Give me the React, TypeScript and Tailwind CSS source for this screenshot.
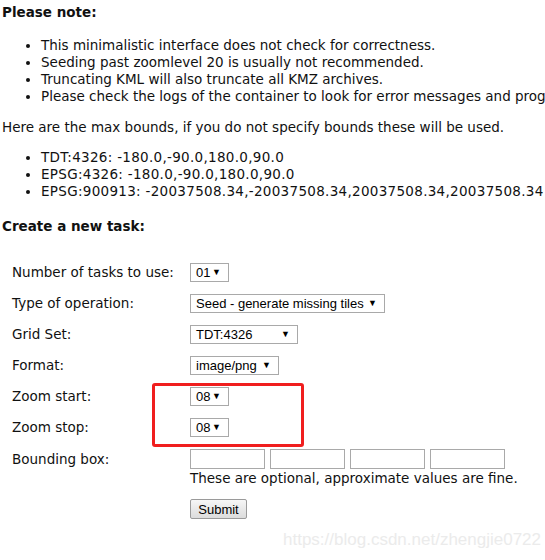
const bodyFont = { fontFamily: '"DejaVu Sans", Verdana, sans-serif' };

const notes = [
  'This minimalistic interface does not check for correctness.',
  'Seeding past zoomlevel 20 is usually not recommended.',
  'Truncating KML will also truncate all KMZ archives.',
  'Please check the logs of the container to look for error messages and progress.',
];

const bounds = [
  'TDT:4326: -180.0,-90.0,180.0,90.0',
  'EPSG:4326: -180.0,-90.0,180.0,90.0',
  'EPSG:900913: -20037508.34,-20037508.34,20037508.34,20037508.34',
];

function FakeSelect({ value, width }: { value: string; width: string }) {
  return (
    <div
      className={`flex h-[19px] items-center justify-between border border-[#a9a9a9] bg-white pl-[5px] pr-[7px] font-['Liberation_Sans',Arial,sans-serif] text-[13px] text-black ${width}`}
    >
      <span>{value}</span>
      <span className="text-[9px] leading-none">▼</span>
    </div>
  );
}

function Row({ label, children }: { label: string; children: React.ReactNode }) {
  return (
    <div className="flex h-[31px] items-center">
      <div className="w-[178px] shrink-0">{label}</div>
      <div>{children}</div>
    </div>
  );
}

export default function App() {
  return (
    <div
      className="relative h-[560px] w-[545px] overflow-hidden bg-white text-[13.5px] leading-[17px] text-[#111]"
      style={bodyFont}
    >
      <div className="whitespace-nowrap pl-[2px] pt-[4px]">
        <h3 className="font-bold">Please note:</h3>

        <ul className="mt-[16px] list-disc pl-[39px]">
          {notes.map((note) => (
            <li key={note}>{note}</li>
          ))}
        </ul>

        <p className="mt-[14px]">
          Here are the max bounds, if you do not specify bounds these will be used.
        </p>

        <ul className="mt-[13px] list-disc pl-[39px] tracking-[0.3px]">
          {bounds.map((b) => (
            <li key={b}>{b}</li>
          ))}
        </ul>

        <h3 className="mt-[18px] font-bold">Create a new task:</h3>

        <div className="mt-[22px] pl-[10px]">
          <Row label="Number of tasks to use:">
            <FakeSelect value="01" width="w-[39px]" />
          </Row>
          <Row label="Type of operation:">
            <FakeSelect value="Seed - generate missing tiles" width="w-[195px]" />
          </Row>
          <Row label="Grid Set:">
            <FakeSelect value="TDT:4326" width="w-[108px]" />
          </Row>
          <Row label="Format:">
            <FakeSelect value="image/png" width="w-[89px]" />
          </Row>
          <Row label="Zoom start:">
            <FakeSelect value="08" width="w-[39px]" />
          </Row>
          <Row label="Zoom stop:">
            <FakeSelect value="08" width="w-[39px]" />
          </Row>
          <div className="flex pt-[6px]">
            <div className="w-[178px] shrink-0 pt-[2px]">Bounding box:</div>
            <div>
              <div className="flex gap-[5px]">
                <div className="h-[20px] w-[75px] border border-[#a9a9a9]" />
                <div className="h-[20px] w-[75px] border border-[#a9a9a9]" />
                <div className="h-[20px] w-[75px] border border-[#a9a9a9]" />
                <div className="h-[20px] w-[75px] border border-[#a9a9a9]" />
              </div>
              <div className="mt-[1px]">These are optional, approximate values are fine.</div>
              <button className="mt-[12px] h-[20px] w-[57px] rounded-[2px] border border-[#9a9a9a] bg-gradient-to-b from-[#f6f6f6] to-[#dcdcdc] font-['Liberation_Sans',Arial,sans-serif] text-[13px] text-black">
                Submit
              </button>
            </div>
          </div>
        </div>
      </div>

      <div className="absolute left-[152px] top-[383px] h-[64px] w-[152px] rounded-[3px] border-[3px] border-[#f01e1e]" />

      <div className="absolute left-[283px] top-[531px] font-['Liberation_Sans',Arial,sans-serif] text-[17px] text-[#ebebeb]">
        https://blog.csdn.net/zhengjie0722
      </div>
    </div>
  );
}
